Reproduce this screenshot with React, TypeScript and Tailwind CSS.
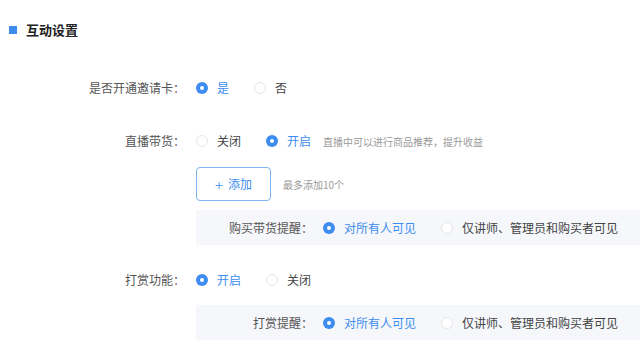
import { type FC } from "react";

const font = { fontFamily: '"Noto Sans CJK SC", "Noto Sans", sans-serif' };

const Radio: FC<{ checked?: boolean; label: string }> = ({ checked, label }) => (
  <label className="flex items-center gap-[9px] whitespace-nowrap">
    {checked ? (
      <span className="flex h-[12px] w-[12px] items-center justify-center rounded-full bg-[#3d8df0]">
        <span className="h-[4px] w-[4px] rounded-full bg-white" />
      </span>
    ) : (
      <span className="h-[12px] w-[12px] rounded-full border border-[#e3e6ea] bg-white" />
    )}
    <span className={checked ? "text-[#3d8df0]" : "text-[#444]"}>{label}</span>
  </label>
);

const Row: FC<{ label: string; children: React.ReactNode; className?: string }> = ({
  label,
  children,
  className,
}) => (
  <div className={`flex h-[20px] items-center ${className ?? ""}`}>
    <div className="w-[186px] shrink-0 pr-[1px] text-right text-[#555]">{label}</div>
    <div className="ml-[10px] flex items-center gap-[25px]">{children}</div>
  </div>
);

const SubBox: FC<{ label: string; className?: string }> = ({ label, className }) => (
  <div className={`ml-[196px] flex h-[35px] items-center bg-[#f5f7fa] ${className ?? ""}`}>
    <div className="w-[117px] shrink-0 text-right text-[#555]">{label}</div>
    <div className="ml-[10px] flex items-center gap-[25px]">
      <Radio checked label="对所有人可见" />
      <Radio label="仅讲师、管理员和购买者可见" />
    </div>
  </div>
);

const App: FC = () => {
  return (
    <div className="h-[349px] w-[640px] overflow-hidden bg-white pt-[20px] text-[12px]" style={font}>
      <div className="flex h-[20px] items-center">
        <span className="ml-[9px] h-[8px] w-[8px] bg-[#3d8df0]" />
        <h2 className="ml-[9px] text-[13px] font-bold text-[#222]">互动设置</h2>
      </div>

      <Row label="是否开通邀请卡：" className="mt-[38px]">
        <Radio checked label="是" />
        <Radio label="否" />
      </Row>

      <Row label="直播带货：" className="mt-[33px]">
        <Radio label="关闭" />
        <div className="flex items-center gap-[12px]">
          <Radio checked label="开启" />
          <span className="text-[10px] text-[#999]">直播中可以进行商品推荐，提升收益</span>
        </div>
      </Row>

      <div className="ml-[196px] mt-[16px] flex items-center gap-[12px]">
        <button className="flex h-[34px] w-[75px] items-center justify-center gap-[5px] rounded-[4px] border border-[#7fb4f2] bg-white text-[12px] text-[#3d8df0]">
          <span className="text-[15px] font-light leading-none">+</span>
          <span>添加</span>
        </button>
        <span className="text-[10px] text-[#999]">最多添加10个</span>
      </div>

      <SubBox label="购买带货提醒：" className="mt-[9px]" />

      <Row label="打赏功能：" className="mt-[25px]">
        <Radio checked label="开启" />
        <Radio label="关闭" />
      </Row>

      <SubBox label="打赏提醒：" className="mt-[15px]" />
    </div>
  );
};

export default App;
